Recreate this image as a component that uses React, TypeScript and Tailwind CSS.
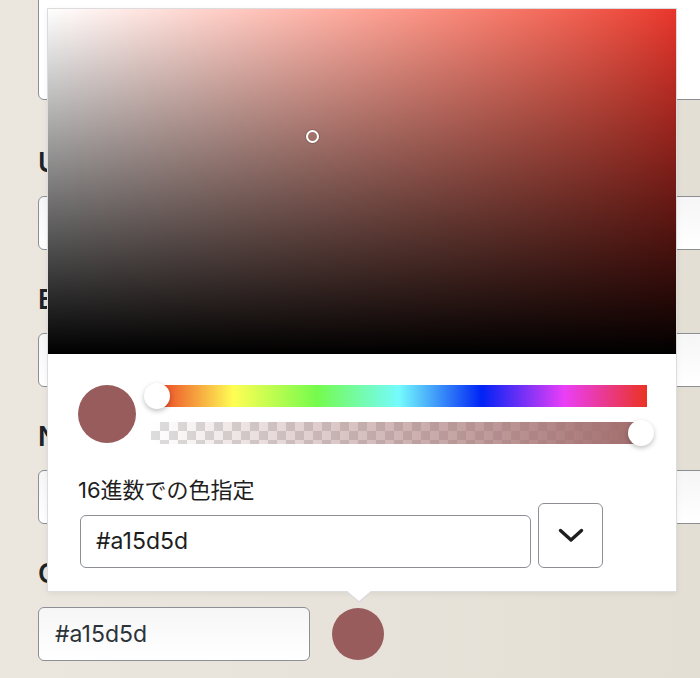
import React from "react";

const font = "font-['Inter','Noto_Sans_CJK_JP',sans-serif]";

const Field: React.FC<{ label: string; first?: boolean }> = ({ label, first }) => (
  <div className={first ? "mt-[45px]" : "mt-[32px]"}>
    <div className="text-[27px] leading-[36px] font-semibold text-[#1d2327] mb-[15px]">
      {label}
    </div>
    <div className="h-[54px] w-[720px] rounded-[6px] border border-[#8c8f94] bg-linear-to-b from-[#f6f6f6] to-white" />
  </div>
);

const ColorPopover: React.FC = () => (
  <div className="absolute left-[47px] top-[8px] w-[630px] border border-[#dcdcde] bg-white shadow-[0_2px_6px_rgba(0,0,0,0.06)]">
    {/* saturation / value area */}
    <div className="relative h-[345px] bg-linear-to-r from-white to-[#e9352b]">
      <div className="absolute inset-0 bg-linear-to-t from-black to-transparent" />
      <div className="absolute left-[258px] top-[121px] w-[13px] h-[13px] rounded-full border-2 border-white shadow-[0_0_0_1px_rgba(0,0,0,0.15)]" />
    </div>

    <div className="pt-[31px] pl-[30px] pr-[29px] pb-[23px]">
      <div className="flex items-start gap-[15px]">
        <div className="w-[58px] h-[58px] rounded-full bg-[#985c5c] shrink-0" />
        <div className="flex-1 flex flex-col gap-[15px]">
          {/* hue */}
          <div className="relative h-[22px] bg-[linear-gradient(to_right,#ea3323,#fffe54,#75fb4c,#74fbfd,#0023f5,#ea3ff7,#ea3323)]">
            <div className="absolute left-[-7px] top-[-2px] w-[26px] h-[26px] rounded-full bg-white shadow-[0_2px_5px_rgba(0,0,0,0.25)]" />
          </div>
          {/* alpha */}
          <div className="relative h-[22px] bg-[conic-gradient(#dddddd_25%,#fff_0_50%,#dddddd_0_75%,#fff_0)] bg-size-[18px_18px]">
            <div className="absolute inset-0 bg-linear-to-r from-transparent to-[#a16b6b]" />
            <div className="absolute right-[-7px] top-[-2px] w-[26px] h-[26px] rounded-full bg-white shadow-[0_2px_5px_rgba(0,0,0,0.25)]" />
          </div>
        </div>
      </div>

      <div className="mt-[33px] text-[22px] leading-[26px] text-[#1e1e1e]">16進数での色指定</div>
      <div className="flex items-end gap-[7px] pl-[2px]">
        <div className="w-[451px] h-[53px] rounded-[6px] border border-[#8c8f94] flex items-center pl-[15px] text-[23px] text-[#1e1e1e]">
          #a15d5d
        </div>
        <button className="w-[65px] h-[65px] rounded-[6px] border border-[#8c8f94] bg-white flex items-center justify-center">
          <svg width="26" height="15" viewBox="0 0 26 15" fill="none">
            <polyline
              points="2.5,2.5 13,12 23.5,2.5"
              stroke="#1e1e1e"
              strokeWidth="3.4"
              strokeLinecap="round"
              strokeLinejoin="round"
            />
          </svg>
        </button>
      </div>
    </div>

    {/* arrow */}
    <div className="absolute left-[297px] bottom-[-12px] w-0 h-0 border-x-[14px] border-x-transparent border-t-[12px] border-t-[#dcdcde]" />
    <div className="absolute left-[298px] bottom-[-10px] w-0 h-0 border-x-[13px] border-x-transparent border-t-[11px] border-t-white" />
  </div>
);

export default function App() {
  return (
    <div className={`relative w-[700px] h-[678px] overflow-hidden bg-linear-to-r from-[#ebe7df] to-[#e3dfd5] ${font}`}>
      <div className="pl-[38px]">
        <div className="-mt-[20px] h-[120px] w-[720px] rounded-[6px] border border-[#8c8f94] bg-white" />
        <Field label="URL" first />
        <Field label="Email" />
        <Field label="Name" />
        <div className="mt-[32px]">
          <div className="text-[27px] leading-[36px] font-semibold text-[#1d2327] mb-[15px]">Color</div>
          <div className="flex items-center gap-[22px]">
            <div className="w-[272px] h-[54px] rounded-[6px] border border-[#8c8f94] bg-linear-to-b from-[#f6f6f6] to-white flex items-center pl-[16px] text-[23px] text-[#2c3338]">
              #a15d5d
            </div>
            <div className="w-[52px] h-[52px] rounded-full bg-[#985c5c]" />
          </div>
        </div>
      </div>
      <ColorPopover />
    </div>
  );
}
